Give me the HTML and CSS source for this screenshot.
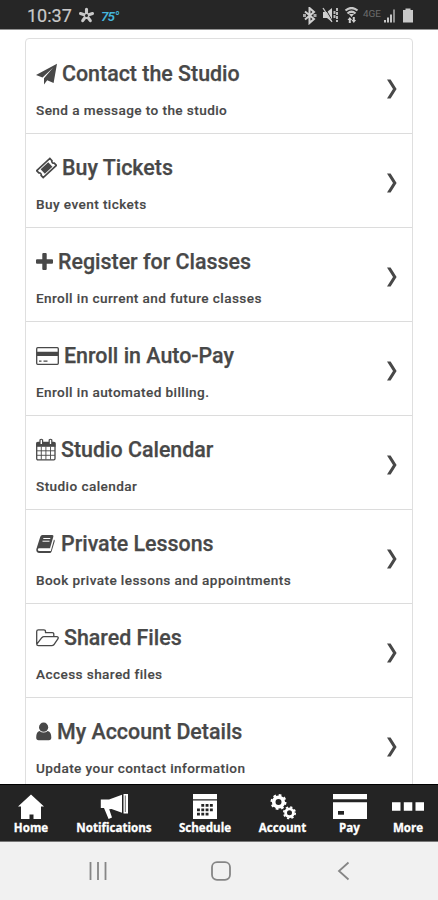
FILE: index.html
```html
<!DOCTYPE html>
<html lang="en">
<head>
<meta charset="utf-8">
<title>Studio</title>
<link rel="stylesheet" href="styles.css">
</head>
<body>
<div class="phone">
  <header class="status">
    <span class="clock">10:37</span>
    <svg class="fan" width="17" height="17" viewBox="0 0 17 17"><g fill="none" stroke="#c9c9c9" stroke-width="3.1" stroke-linecap="round"><path d="M8.5 8.5V2.2M8.5 8.5l6-2M8.5 8.5l3.8 5.2M8.5 8.5l-3.8 5.2M8.5 8.5l-6-2"/></g><circle cx="8.5" cy="8.5" r="1.5" fill="#262626"/></svg>
    <span class="temp">75°</span>
    <svg class="indicators" width="112" height="18" viewBox="302 7 112 18">
      <g fill="none" stroke="#d0d0d0" stroke-width="2"><path d="M305 11.500l9 7.500-4.500 4V8l4.500 4-9 7.500"/></g>
      <path d="M303 14h3v3h-3zM313.500 14h3v3h-3z" fill="#a8a8a8"/>
      <path d="M323 12h4l5-4v14l-5-4h-4z" fill="#d0d0d0"/>
      <path d="M324.500 7l8.500 15" stroke="#262626" stroke-width="1"/>
      <path d="M323 8l9 14" stroke="#c8c8c8" stroke-width="1.300"/>
      <path d="M337 8v14M334.500 11v8" stroke="#b8b8b8" stroke-width="2" stroke-dasharray="3 1"/>
      <g fill="none" stroke="#c8c8c8" stroke-width="2.200"><path d="M345.500 10.500q6-5 12 0M347.500 13.500q4-3.500 8 0"/></g>
      <path d="M349 14h5l-2.500 3zM347.500 20l2.300-3 2.300 3h-1.300v3h-2v-3zM351.500 20l2.300 3 2.300-3h-1.300v-3h-2v3z" fill="#d0d0d0"/>
      <text class="carrier" x="363" y="16.500" textLength="18" lengthAdjust="spacingAndGlyphs">4GE</text>
      <path d="M384 20h2v2.500h-2zM387 17.500h2v5h-2zM390 14.500h2v8h-2z" fill="#c6c6c6"/>
      <path d="M393 9.500h2v13h-2z" fill="#8f8f8f"/>
      <path d="M405.500 8.500h5V10h2.500v12.500h-10V10h2.500z" fill="#c9c9c9"/>
    </svg>
  </header>

  <main class="content">
    <ul class="menu">
      <li class="item">
        <div class="info">
          <h2 class="title"><svg width="21" height="22" viewBox="0 0 21 22"><path fill="currentColor" d="M21 .800L17.600 20l-6.400-2.700L8 21.500v-6.300L17 4.800 6.500 14.500 0 11.900z"/></svg><span>Contact the Studio</span></h2>
          <p class="desc">Send a message to the studio</p>
        </div>
        <svg class="chevron" width="12" height="20" viewBox="0 0 12 20"><path d="M1 .500h3.600l6 9.500-6 9.500H1L7 10z"/></svg>
      </li>
      <li class="item">
        <div class="info">
          <h2 class="title"><svg width="21" height="22" viewBox="0 0 21 22"><g transform="rotate(-43 10.500 11)"><path fill="none" stroke="currentColor" stroke-width="1.700" d="M1.500 6.300h18v3a2 2 0 0 0 0 3.500v3h-18v-3a2 2 0 0 0 0-3.500z"/><path fill="currentColor" d="M5.300 8h10.400v6.100H5.300z"/></g></svg><span>Buy Tickets</span></h2>
          <p class="desc">Buy event tickets</p>
        </div>
        <svg class="chevron" width="12" height="20" viewBox="0 0 12 20"><path d="M1 .500h3.600l6 9.500-6 9.500H1L7 10z"/></svg>
      </li>
      <li class="item">
        <div class="info">
          <h2 class="title"><svg width="17" height="22" viewBox="0 0 17 22"><path fill="currentColor" d="M6.300 3q0-1 1-1h2.400q1 0 1 1v5.300H16q1 0 1 1v2.400q0 1-1 1h-5.300V18q0 1-1 1H7.300q-1 0-1-1v-5.300H1q-1 0-1-1V9.300q0-1 1-1h5.300z"/></svg><span>Register for Classes</span></h2>
          <p class="desc">Enroll in current and future classes</p>
        </div>
        <svg class="chevron" width="12" height="20" viewBox="0 0 12 20"><path d="M1 .500h3.600l6 9.500-6 9.500H1L7 10z"/></svg>
      </li>
      <li class="item">
        <div class="info">
          <h2 class="title"><svg width="23" height="22" viewBox="0 0 23 22"><rect x=".700" y="2.700" width="21.600" height="16.600" rx="1" fill="none" stroke="currentColor" stroke-width="1.300"/><path fill="currentColor" d="M1 6.700h21v4.300H1zM3 15.500h2.500v1.300H3zM7.500 15.500h4v1.300h-4z"/></svg><span>Enroll in Auto-Pay</span></h2>
          <p class="desc">Enroll in automated billing.</p>
        </div>
        <svg class="chevron" width="12" height="20" viewBox="0 0 12 20"><path d="M1 .500h3.600l6 9.500-6 9.500H1L7 10z"/></svg>
      </li>
      <li class="item">
        <div class="info">
          <h2 class="title"><svg width="20" height="24" viewBox="0 0 20 24"><g fill="none" stroke="currentColor"><rect x=".700" y="4.500" width="18.300" height="17.300" rx="1.200" stroke-width="1.300"/><path stroke-width=".900" d="M1 12.800h18M1 17.300h18M5.300 8.500v13M9.900 8.500v13M14.500 8.500v13"/></g><path fill="currentColor" d="M.500 4.500h19v4.300H.500z"/><path fill="#fff" stroke="currentColor" stroke-width="1.200" d="M4 2q1.300-1.500 2.600 0v4.500H4zM13.200 2q1.300-1.500 2.600 0v4.500h-2.600z"/></svg><span>Studio Calendar</span></h2>
          <p class="desc">Studio calendar</p>
        </div>
        <svg class="chevron" width="12" height="20" viewBox="0 0 12 20"><path d="M1 .500h3.600l6 9.500-6 9.500H1L7 10z"/></svg>
      </li>
      <li class="item">
        <div class="info">
          <h2 class="title"><svg width="20" height="22" viewBox="0 0 20 22"><path fill="currentColor" d="M6.500 2h9.800q1.500 0 1.100 1.500L14 15.200H3.300q-1.400 0-1.500 1.200 0 1.500 1.700 1.500h11.300L18 6.500q1 .600.700 1.700l-3.100 10.200q-.500 1.500-2 1.500H3.500Q0 19.900.3 16.300L4.200 4Q4.700 2 6.500 2z"/><path stroke="#fff" stroke-width="1" d="M7.300 5.500h7M6.500 8.200h7"/></svg><span>Private Lessons</span></h2>
          <p class="desc">Book private lessons and appointments</p>
        </div>
        <svg class="chevron" width="12" height="20" viewBox="0 0 12 20"><path d="M1 .500h3.600l6 9.500-6 9.500H1L7 10z"/></svg>
      </li>
      <li class="item">
        <div class="info">
          <h2 class="title"><svg width="23" height="22" viewBox="0 0 23 22"><path fill="none" stroke="currentColor" stroke-width="1.300" stroke-linejoin="round" d="M17.800 9.700V7.200q0-1.500-1.500-1.500H9.500V4.600q0-1.700-1.700-1.700H2.400Q.7 2.900.7 4.600v12.300q0 1.800 1.800 1.800h13.300q1.200 0 2-.9l4.100-5.900q1-2.200-1.200-2.200H8q-1.300 0-2.200 1L1 16.900"/></svg><span>Shared Files</span></h2>
          <p class="desc">Access shared files</p>
        </div>
        <svg class="chevron" width="12" height="20" viewBox="0 0 12 20"><path d="M1 .500h3.600l6 9.500-6 9.500H1L7 10z"/></svg>
      </li>
      <li class="item">
        <div class="info">
          <h2 class="title"><svg width="16" height="22" viewBox="0 0 16 22"><circle cx="7.600" cy="6.200" r="4.600" fill="currentColor"/><path fill="currentColor" d="M3.500 10q4 3 8.200 0 3.600.7 3.600 6.500 0 2.700-2.500 2.700H2.600Q.2 19.200.2 16.500q0-5.800 3.300-6.500z"/></svg><span>My Account Details</span></h2>
          <p class="desc">Update your contact information</p>
        </div>
        <svg class="chevron" width="12" height="20" viewBox="0 0 12 20"><path d="M1 .500h3.600l6 9.500-6 9.500H1L7 10z"/></svg>
      </li>
    </ul>
  </main>

  <nav class="tabs">
    <a class="tab"><svg width="26" height="26" viewBox="0 0 26 26"><path d="M13 .500L26 12.500h-3V25h-7.500v-4.500h-4V25H3V12.500H0z"/></svg><span>Home</span></a>
    <a class="tab"><svg width="28" height="26" viewBox="0 0 28 26"><path d="M23.500 0H28v19.500h-4.500zM22 .800v17.900L11.500 15l-2.300.2L12 23.500 8.600 25 4 14H.800V5.500H9z"/><path d="M25.300 1.500v16.500" stroke="#242424" stroke-width=".700"/></svg><span>Notifications</span></a>
    <a class="tab"><svg width="24" height="26" viewBox="0 0 24 26"><path d="M0 0h24v5.300H0zM0 6.500h24V25H0z"/><path fill="none" stroke="#242424" stroke-width="2.800" stroke-dasharray="2.900 1.400" d="M8.300 11.400h11.700M4 15.800h16M4 20.200h12"/></svg><span>Schedule</span></a>
    <a class="tab"><svg width="26" height="26" viewBox="0 0 26 26"><g fill="none" stroke="#fff"><circle cx="8.500" cy="8" r="4.800" stroke-width="3.600"/><circle cx="8.500" cy="8" r="7" stroke-width="2" stroke-dasharray="2.750 2.750"/><circle cx="19.500" cy="18.800" r="3.900" stroke-width="2.800"/><circle cx="19.500" cy="18.800" r="5.700" stroke-width="1.700" stroke-dasharray="2.240 2.240"/></g></svg><span>Account</span></a>
    <a class="tab"><svg width="34" height="26" viewBox="0 0 34 26"><path d="M0 0h34v5.300H0zM0 8.300h34V25H0z"/><path fill="#242424" d="M5 17h6v3.700H5z"/></svg><span>Pay</span></a>
    <a class="tab"><svg width="32" height="26" viewBox="0 0 32 26"><path d="M0 8.200h8.500v8.500H0zM11.800 8.200h8.500v8.500h-8.500zM23.500 8.200H32v8.500h-8.500z"/></svg><span>More</span></a>
  </nav>

  <footer class="system">
    <svg width="20" height="20" viewBox="0 0 20 20"><path d="M2.500 1v18M10 1v18M17.500 1v18"/></svg>
    <svg width="20" height="20" viewBox="0 0 20 20"><rect x="1" y="1.200" width="18" height="17.600" rx="5"/></svg>
    <svg width="20" height="20" viewBox="0 0 20 20"><path d="M14.500 1.500L5 10l9.500 8.500"/></svg>
  </footer>
</div>
</body>
</html>
```
FILE: styles.css
```css
* { box-sizing: border-box; }
body { margin: 0; background: #fff; font-family: Roboto, "Liberation Sans", sans-serif; }
.phone { width: 438px; height: 900px; display: flex; flex-direction: column; overflow: hidden; }

.status { flex: none; height: 30px; background: #262626; border-bottom: 1px solid #929292; display: flex; align-items: center; padding: 2px 24px 0 27px; }
.clock { width: 45px; font-size: 18px; line-height: 20px; color: #c9c9c9; white-space: nowrap; -webkit-text-stroke: 0.2px; }
.fan { margin-left: 6px; }
.temp { margin-left: 6px; font-size: 13.500px; font-weight: 600; font-style: italic; letter-spacing: -0.900px; color: #45b5dc; }
.indicators { margin-left: auto; }
.carrier { font-size: 9.500px; fill: #6c6c6c; }

.content { flex: 1; min-height: 0; overflow: hidden; padding: 8px 25px 0; }
.menu { list-style: none; margin: 0; padding: 1px 0 0; border: 1px solid #dfdfdf; border-radius: 4px; }
.item { height: 94px; padding: 0 14px 0 10px; display: flex; border-bottom: 1px solid #dcdcdc; color: #484848; }
.info { flex: 1; padding-top: 22px; }
.title { margin: 0; height: 24px; display: flex; align-items: center; gap: 5px; font-size: 21.400px; font-weight: 500; line-height: 24px; white-space: nowrap; -webkit-text-stroke: 0.25px; }
.desc { margin: 16px 0 0; font-size: 13.600px; font-weight: 500; line-height: 17px; white-space: nowrap; letter-spacing: 0.410px; -webkit-text-stroke: 0.15px; }
.chevron { flex: none; margin-top: 39px; fill: currentColor; }

.tabs { flex: none; height: 58px; background: #242424; border-top: 1px solid #000; border-bottom: 1px solid #777; display: grid; grid-template-columns: 62px 104px 78px 77px 57px 60px; padding-top: 9px; }
.tab { display: flex; flex-direction: column; align-items: center; color: #fff; font: 700 11.600px/14px "Open Sans", sans-serif; -webkit-text-stroke: 0.3px; }
.tab svg { fill: #fff; }
.tab span { margin-top: 1px; }

.system { flex: none; height: 58px; background: #f1f1f1; display: flex; justify-content: space-between; align-items: center; padding: 0 84px 0 88px; }
.system svg { fill: none; stroke: #868686; stroke-width: 1.800; }
```
